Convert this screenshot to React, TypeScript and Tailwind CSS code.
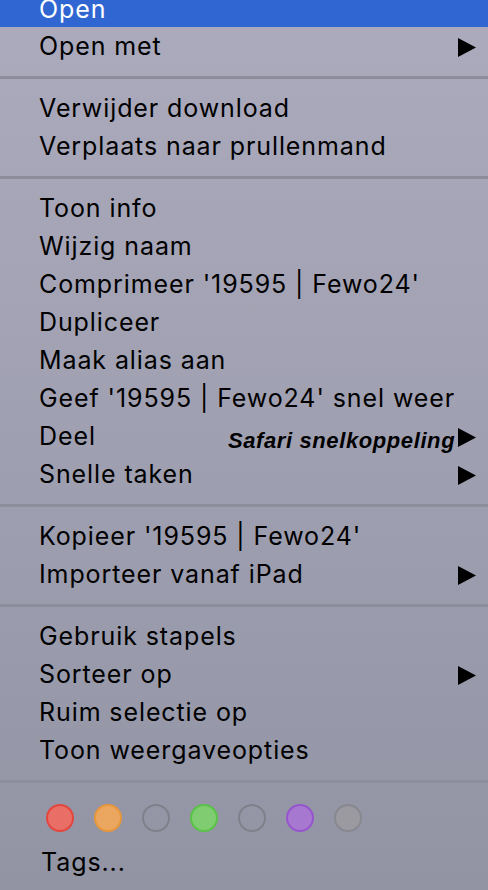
import React from "react";

type Item = { label: string; sub?: boolean };

const groups: Item[][] = [
  [{ label: "Verwijder download" }, { label: "Verplaats naar prullenmand" }],
  [
    { label: "Toon info" },
    { label: "Wijzig naam" },
    { label: "Comprimeer '19595 | Fewo24'" },
    { label: "Dupliceer" },
    { label: "Maak alias aan" },
    { label: "Geef '19595 | Fewo24' snel weer" },
    { label: "Deel", sub: true },
    { label: "Snelle taken", sub: true },
  ],
  [{ label: "Kopieer '19595 | Fewo24'" }, { label: "Importeer vanaf iPad", sub: true }],
  [
    { label: "Gebruik stapels" },
    { label: "Sorteer op", sub: true },
    { label: "Ruim selectie op" },
    { label: "Toon weergaveopties" },
  ],
];

const tags = [
  "bg-[#e86e66] border-[#e2463c]",
  "bg-[#eba760] border-[#e8963c]",
  "bg-transparent border-[#80808a]",
  "bg-[#80cc70] border-[#5ac246]",
  "bg-transparent border-[#80808a]",
  "bg-[#a678d0] border-[#9655cc]",
  "bg-[#9a9aa0] border-[#88888e]",
];

function Arrow() {
  return (
    <svg width="18" height="19" viewBox="0 0 18 19" className="shrink-0">
      <path d="M0 0 L18 9.5 L0 19 Z" fill="#000" />
    </svg>
  );
}

function Row({ item }: { item: Item }) {
  return (
    <div className="flex h-[38px] items-center justify-between pl-[39px] pr-[12px] pt-[2px]">
      <span>{item.label}</span>
      {item.sub && <Arrow />}
    </div>
  );
}

function Separator() {
  return (
    <div className="pt-[11px] pb-[10px]">
      <div className="h-[3px] bg-[#8d8d9b]" />
    </div>
  );
}

export default function App() {
  return (
    <div
      className="relative h-[890px] w-[488px] overflow-hidden bg-gradient-to-b from-[#acabbd] to-[#9294a4] text-[25px] tracking-[0.9px] text-black"
      style={{ fontFamily: "Inter, 'Liberation Sans', sans-serif" }}
    >
      <div className="h-[27px] overflow-hidden bg-[#2f66d2] pl-[39px] leading-[18px] text-white">
        Open
      </div>
      <Row item={{ label: "Open met", sub: true }} />
      {groups.map((g, i) => (
        <div key={i}>
          <Separator />
          {g.map((item) => (
            <Row key={item.label} item={item} />
          ))}
        </div>
      ))}
      <Separator />
      <div className="flex gap-[20px] pl-[46px] pt-[11px]">
        {tags.map((c, i) => (
          <div key={i} className={`h-[28px] w-[28px] rounded-full border-2 ${c}`} />
        ))}
      </div>
      <div className="mt-[11px] flex h-[38px] items-center pl-[41px] pt-[2px]">Tags...</div>

      <div
        className="absolute left-[228px] top-[430px] text-[22px] font-bold italic leading-none tracking-[0.6px]"
        style={{ fontFamily: "'Liberation Sans', Arial, sans-serif" }}
      >
        Safari snelkoppeling
      </div>
    </div>
  );
}
